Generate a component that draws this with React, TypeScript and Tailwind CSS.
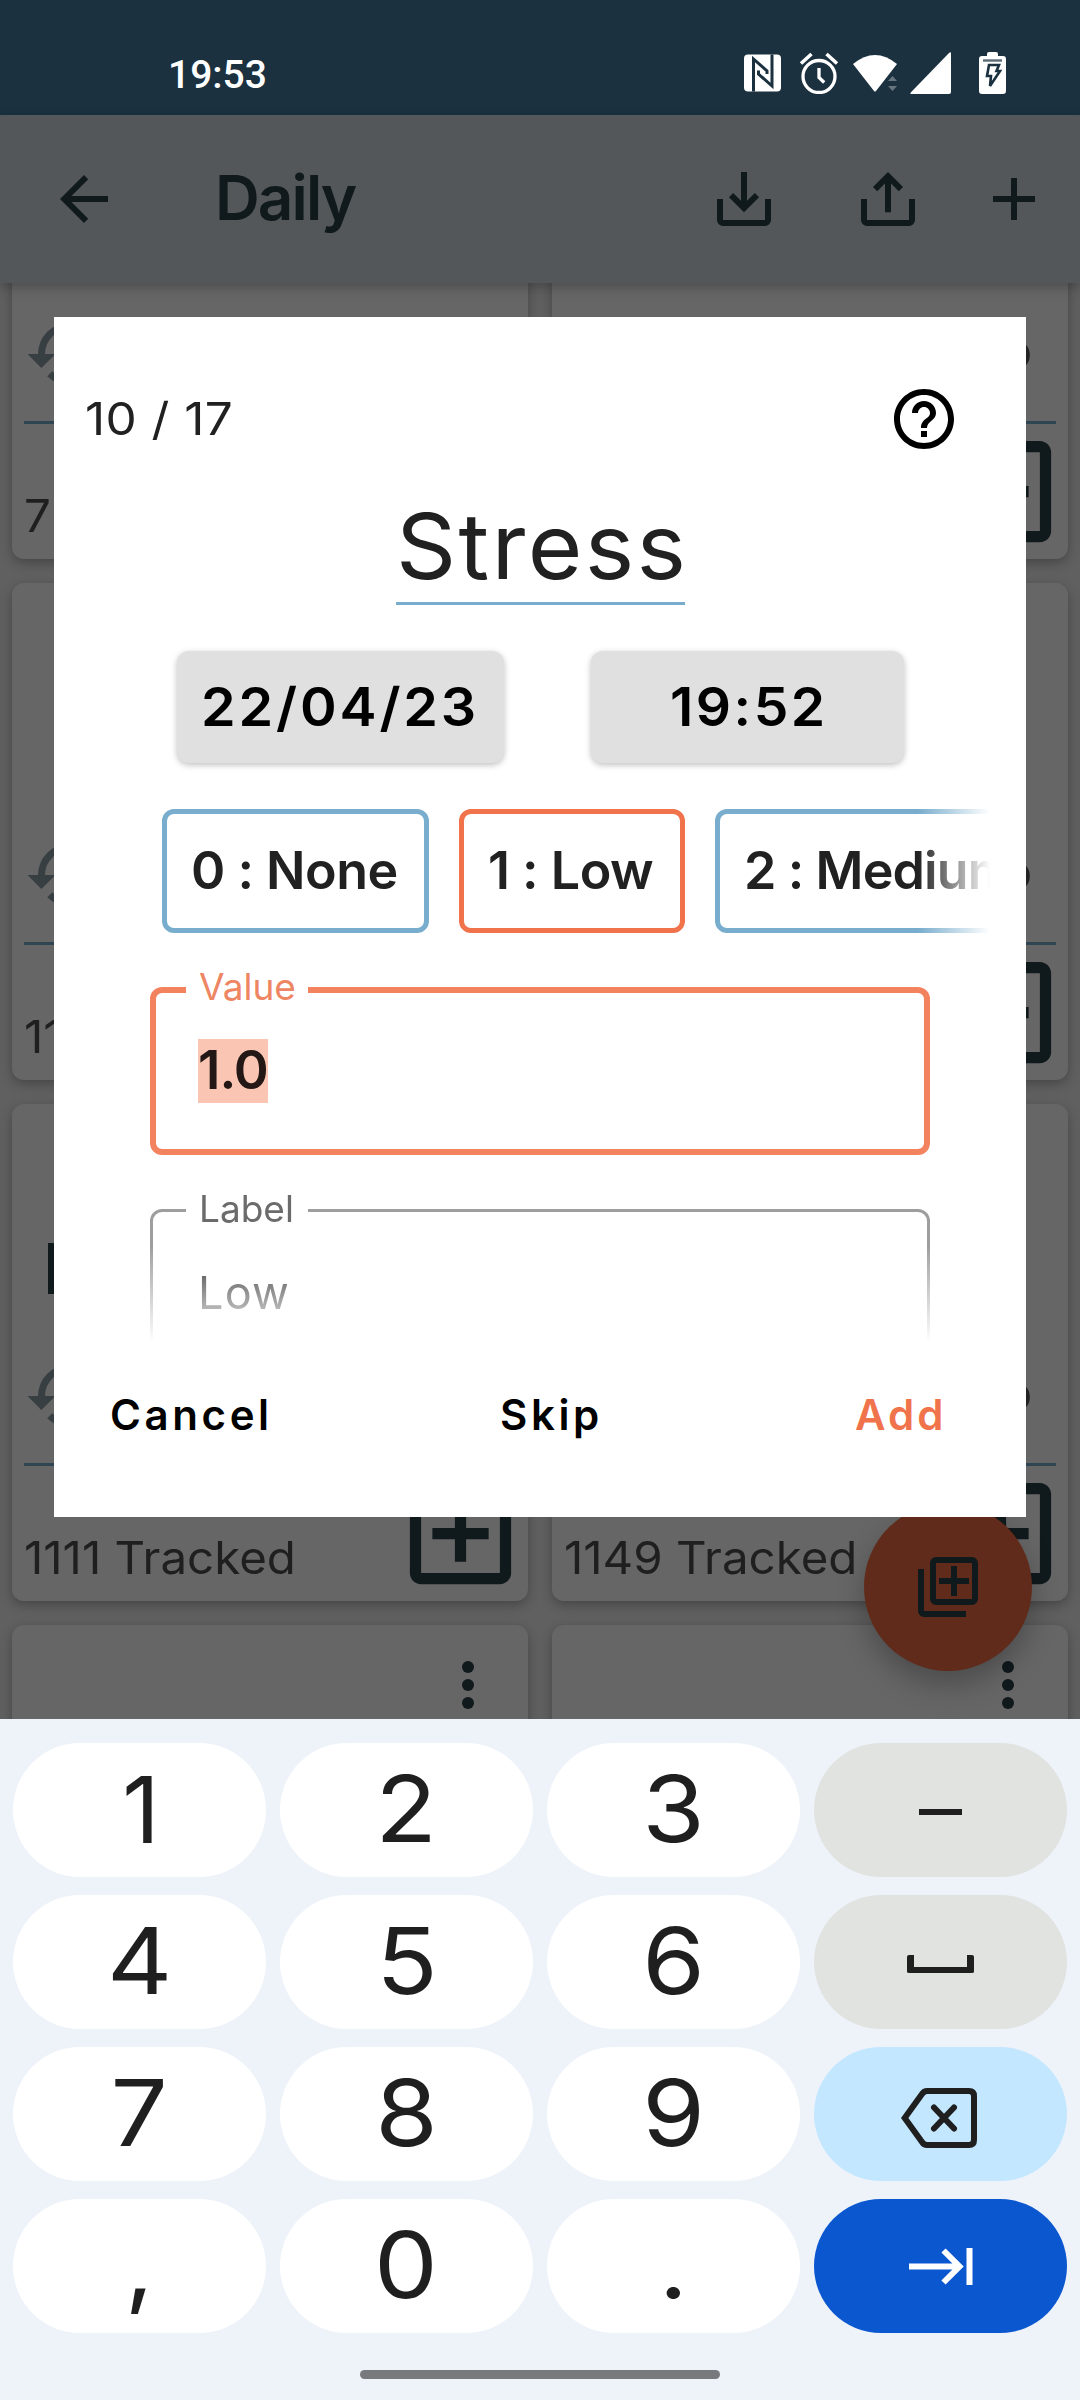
import React from "react";

const SANS = "font-['Inter','Liberation_Sans',sans-serif]";

function ArrowBack() {
  return (
    <svg viewBox="0 0 24 24" className="size-[72px]" fill="#10191c">
      <path d="M20 11H7.83l5.59-5.59L12 4l-8 8 8 8 1.41-1.41L7.83 13H20v-2z" />
    </svg>
  );
}

function TrayIcon({ up }: { up?: boolean }) {
  return (
    <svg viewBox="0 0 24 24" className="size-[72px]" fill="none" stroke="#10191c" strokeWidth="2">
      <path d="M4 12v7a1 1 0 0 0 1 1h14a1 1 0 0 0 1-1v-7" />
      {up ? (
        <path d="M12 16.4V4.4M7.7 8.7L12 4.4l4.3 4.3" />
      ) : (
        <path d="M12 3v12M7.7 10.7L12 15l4.3-4.3" />
      )}
    </svg>
  );
}

function StatusBar() {
  return (
    <div className="flex h-[115px] items-center bg-[#1b313f] pl-[168px] pr-[74px] pt-[35px]">
      <span className="font-['Roboto',sans-serif] text-[39px] font-medium leading-none text-white">19:53</span>
      <div className="ml-auto flex items-center pb-[5px]">
        <svg width="37" height="38" viewBox="0 0 37 38" className="mr-[18px]">
          <rect width="37" height="37" y="0.5" rx="4" fill="#fff" />
          <path
            d="M9.500 37.500V5L23 17v3M28 0.500V32L14.500 20V16.500"
            fill="none"
            stroke="#1b313f"
            strokeWidth="3"
          />
        </svg>
        <svg width="40" height="42" viewBox="0 0 40 42" className="mr-[13px]" fill="none" stroke="#fff">
          <circle cx="20" cy="24.500" r="16" strokeWidth="3.300" />
          <path d="M20 16v9.500l5.200 5" strokeWidth="3.300" />
          <path d="M2 11.500L12.500 2M38 11.500L27.500 2" strokeWidth="3.600" />
        </svg>
        <svg width="46" height="42" viewBox="0 0 46 42" className="mr-[12px]">
          <path d="M1 12Q23-6 45 12L24 39Q23 40 22 39Z" fill="#fff" />
          <path d="M36 29l4.500-5 4.500 5zM36 34l4.500 5 4.500-5z" fill="#66757f" />
        </svg>
        <svg width="41" height="42" viewBox="0 0 41 42" className="mr-[28px]">
          <path d="M41 1.500V40q0 2-2 2H1.500Q-.5 42 1 40.200L39 1Q41-.8 41 1.500Z" fill="#fff" />
        </svg>
        <svg width="27" height="42" viewBox="0 0 27 42">
          <path d="M8 4V2q0-2 2-2h7q2 0 2 2v2h5q3 0 3 3v32q0 3-3 3H3q-3 0-3-3V7q0-3 3-3z" fill="#fff" />
          <path d="M4 8.500h19" stroke="#5b6b76" strokeWidth="2.400" />
          <path d="M10 13h10l-2.500 6h3.500L11 34l1-10H8z" fill="#fff" stroke="#1b313f" strokeWidth="2.600" />
        </svg>
      </div>
    </div>
  );
}

function AppBar() {
  return (
    <div className="relative z-10 flex h-[168px] items-center bg-[#53575a] pl-[48px] pr-[30px] shadow-[0_4px_12px_rgba(0,0,0,0.25)]">
      <ArrowBack />
      <h1 className="ml-[95px] pb-[2px] text-[62px] font-semibold leading-none tracking-[-1.900px] text-[#10191c]">Daily</h1>
      <div className="ml-auto flex">
        <div className="mr-[72px]">
          <TrayIcon />
        </div>
        <div className="mr-[54px]">
          <TrayIcon up />
        </div>
        <svg viewBox="0 0 24 24" className="size-[72px]" stroke="#10191c" strokeWidth="2">
          <path d="M5 12h14M12 5v14" />
        </svg>
      </div>
    </div>
  );
}

type CardData = { text?: string; marker?: boolean };

function TrackerCard({ text, marker }: CardData) {
  return (
    <div className="flex h-[497px] flex-col rounded-[12px] bg-[#666666] shadow-[0_4px_12px_rgba(0,0,0,0.28)]">
      <div className="flex h-[250px] justify-between pl-[36px] pr-[24px] pt-[24px]">
        <div>{marker && <div className="mt-[115px] h-[51px] w-[14px] bg-[#10191c]" />}</div>
        <svg viewBox="0 0 24 24" className="size-[72px]" fill="#10191c">
          <circle cx="12" cy="6" r="2" />
          <circle cx="12" cy="12" r="2" />
          <circle cx="12" cy="18" r="2" />
        </svg>
      </div>
      <div className="flex h-[84px] items-center justify-between pl-[12px] pr-[36px]">
        <svg viewBox="0 0 24 24" className="size-[84px]" fill="#383f42">
          <path d="M13.500 8H12v5l4.280 2.540.72-1.210-3.500-2.080V8M13 3a9 9 0 0 0-9 9H1l3.960 4.030L9 12H6a7 7 0 0 1 7-7 7 7 0 0 1 7 7 7 7 0 0 1-7 7c-1.930 0-3.680-.79-4.940-2.060l-1.420 1.420A8.900 8.900 0 0 0 13 21a9 9 0 0 0 9-9 9 9 0 0 0-9-9" />
        </svg>
        <span className="pb-[8px] text-[51px] font-semibold leading-none text-[#232323]">o</span>
      </div>
      <div className="mx-[12px] mt-[25px] h-[3px] bg-[#304552]" />
      <div className="flex h-[135px] items-center justify-between pl-[12px]">
        <span className="origin-left scale-x-[1.055] whitespace-pre pt-[48px] text-[45px] leading-none text-[#1f1f1f]">
          {text}
        </span>
        <svg viewBox="0 0 24 24" className="size-[135px] shrink-0" fill="#10191c">
          <path d="M19 3H5c-1.110 0-2 .9-2 2v14c0 1.100.89 2 2 2h14c1.100 0 2-.9 2-2V5c0-1.100-.9-2-2-2zm0 16H5V5h14v14zm-8-2h2v-4h4v-2h-4V7h-2v4H7v2h4z" />
        </svg>
      </div>
    </div>
  );
}

const cards: CardData[] = [
  { text: "7" },
  {},
  { text: "11" },
  {},
  { text: "1111 Tracked", marker: true },
  { text: "1149 Tracked" },
  {},
  {},
];

function Background() {
  return (
    <div className="h-[1436px] overflow-hidden bg-[#606060]">
      <div className="-mt-[221px] grid grid-cols-2 gap-[24px] px-[12px]">
        {cards.map((c, i) => (
          <TrackerCard key={i} {...c} />
        ))}
      </div>
    </div>
  );
}

function Fab() {
  return (
    <div className="absolute left-[864px] top-[1503px] flex size-[168px] items-center justify-center rounded-full bg-[#602b1a] shadow-[0_14px_28px_rgba(0,0,0,0.25)]">
      <svg viewBox="0 0 24 24" className="size-[72px]" fill="none" stroke="#10191c" strokeWidth="2">
        <path d="M3 6v14a1 1 0 0 0 1 1h14" />
        <rect x="7" y="3" width="14" height="14" rx="1" />
        <path d="M9 10h10M14 5v10" />
      </svg>
    </div>
  );
}

function Dialog() {
  return (
    <div className="absolute left-[54px] top-[317px] flex h-[1200px] w-[972px] flex-col bg-white pt-[66px]">
      <div className="flex h-[72px] items-center justify-between pl-[31px] pr-[66px]">
        <span className="origin-left scale-x-[1.1] whitespace-pre pb-[2px] text-[45px] leading-none tracking-[0.400px] text-[#212121]">
          10 / 17
        </span>
        <svg viewBox="0 0 24 24" className="size-[72px]">
          <path d="M11 18h2v-2h-2v2zm1-16C6.480 2 2 6.480 2 12s4.480 10 10 10 10-4.480 10-10S17.520 2 12 2zm0 18c-4.410 0-8-3.590-8-8s3.590-8 8-8 8 3.590 8 8-3.590 8-8 8zm0-14c-2.210 0-4 1.790-4 4h2c0-1.100.9-2 2-2s2 .9 2 2c0 2-3 1.750-3 5h2c0-2.250 3-2.500 3-5 0-2.210-1.790-4-4-4z" />
        </svg>
      </div>

      <h2 className="ml-[342px] mt-[37px] h-[113px] w-[289px] border-b-[3px] border-[#78adcd] text-[91px] leading-[109px] text-[#212121]">
        <span className="inline-block origin-left scale-x-[1.03] tracking-[2.300px]">Stress</span>
      </h2>

      <div className="mt-[46px] flex gap-[87px] pl-[123px] text-[53px] font-semibold leading-[110px] text-black">
        <button className="h-[112px] w-[327px] rounded-[12px] bg-[#e0e0e0] pl-[24px] text-left shadow-[0_2px_6px_rgba(0,0,0,0.25)]">
          <span className="inline-block origin-left scale-x-[1.05] tracking-[2.700px]">22/04/23</span>
        </button>
        <button className="h-[112px] w-[313px] rounded-[12px] bg-[#e0e0e0] pl-[79px] text-left shadow-[0_2px_6px_rgba(0,0,0,0.25)]">
          <span className="inline-block origin-left scale-x-[1.04] tracking-[2.400px]">19:52</span>
        </button>
      </div>

      <div className="ml-[108px] mt-[46px] flex w-[828px] gap-[30px] overflow-hidden whitespace-pre text-[52px] font-semibold leading-[114px] tracking-[-0.500px] text-[#212121] [mask-image:linear-gradient(to_right,black_756px,transparent_828px)]">
        <div className="h-[124px] w-[267px] shrink-0 rounded-[12px] border-[5px] border-[#78adcd] pl-[24px]">0 : None</div>
        <div className="h-[124px] w-[226px] shrink-0 rounded-[12px] border-[5px] border-[#f0734c] pl-[24px]">1 : Low</div>
        <div className="h-[124px] w-[342px] shrink-0 rounded-[12px] border-[5px] border-[#78adcd] pl-[24px] tracking-[-0.900px]">
          2 : Medium
        </div>
      </div>

      <div className="relative ml-[96px] mt-[54px] flex h-[168px] w-[780px] shrink-0 items-center rounded-[12px] border-[6px] border-[#f3825f] pl-[42px]">
        <label className="absolute -left-[6px] -top-[27px] ml-[36px] h-[42px] w-[122px] bg-white pl-[13px] text-[37px] leading-[42px] text-[#ee8663]">
          Value
        </label>
        <span className="h-[64px] w-[70px] bg-[#fac5b3] text-[53px] font-semibold leading-[63px] tracking-[-1px] text-[#231815]">
          1.0
        </span>
      </div>

      <div className="mt-[25px] h-[162px] shrink-0 overflow-hidden pl-[96px] pt-[29px] [mask-image:linear-gradient(to_bottom,black_66px,transparent_162px)]">
        <div className="relative flex h-[168px] w-[780px] items-center rounded-[12px] border-[3px] border-[#9e9e9e] pl-[45px]">
          <label className="absolute left-[33px] -top-[24px] h-[42px] w-[122px] bg-white pl-[13px] text-[37px] leading-[42px] text-[#6b6b6b]">
            Label
          </label>
          <span className="pb-[2px] text-[45px] leading-none tracking-[1.200px] text-[#2b2b2b]">Low</span>
        </div>
      </div>

      <div className="flex h-[145px] items-center pl-[56px] text-[42px] font-semibold leading-none text-black">
        <button className="w-[390px] text-left tracking-[3.600px]">Cancel</button>
        <button className="w-[355px] text-left tracking-[3.600px]">Skip</button>
        <button className="text-left tracking-[3px] text-[#f0734c]">Add</button>
      </div>
    </div>
  );
}

function Key({ children, tone = "bg-white" }: { children: React.ReactNode; tone?: string }) {
  return (
    <div className={`flex h-[134px] items-center justify-center rounded-full text-[92px] leading-none text-[#1f1f1f] ${tone}`}>
      {children}
    </div>
  );
}

function Digit({ children }: { children: string }) {
  return <span className="scale-x-[1.1] pb-[2px]">{children}</span>;
}

function Keyboard() {
  return (
    <div className="flex h-[681px] flex-col items-center bg-[#eef3fa] px-[13px] pt-[24px]">
      <div className="grid w-full grid-cols-4 gap-x-[14px] gap-y-[18px]">
        <Key><span className="pl-[3px]"><Digit>1</Digit></span></Key>
        <Key><Digit>2</Digit></Key>
        <Key><Digit>3</Digit></Key>
        <Key tone="bg-[#e1e3e1]">
          <div className="mt-[3px] h-[6px] w-[43px] bg-[#1f1f1f]" />
        </Key>
        <Key><Digit>4</Digit></Key>
        <Key><Digit>5</Digit></Key>
        <Key><Digit>6</Digit></Key>
        <Key tone="bg-[#e1e3e1]">
          <div className="mt-[4px] h-[18px] w-[67px] rounded-[2px] border-x-[7px] border-b-[6px] border-[#1f1f1f]" />
        </Key>
        <Key><Digit>7</Digit></Key>
        <Key><Digit>8</Digit></Key>
        <Key><Digit>9</Digit></Key>
        <Key tone="bg-[#c2e7ff]">
          <svg width="76" height="60" viewBox="0 0 76 60" className="mr-[4px] mt-[7px]" fill="none" stroke="#1f1f1f" strokeWidth="6">
            <path d="M3.700 30L21 6Q23 3 26 3H68Q73 3 73 8V52Q73 57 68 57H26Q23 57 21 54Z" />
            <path d="M33 19.500L53 40.500M53 19.500L33 40.500" strokeLinecap="round" />
          </svg>
        </Key>
        <Key><Digit>,</Digit></Key>
        <Key><Digit>0</Digit></Key>
        <Key><Digit>.</Digit></Key>
        <Key tone="bg-[#0b57d0]">
          <svg width="64" height="37" viewBox="0 0 64 37" fill="none" stroke="#fff" strokeWidth="6">
            <path d="M0 18.500H50M34.500 2.500L50.500 18.500L34.500 34.500M60.500 0V37" />
          </svg>
        </Key>
      </div>
      <div className="mt-[37px] h-[9px] w-[360px] rounded-full bg-[#77797d]" />
    </div>
  );
}

export default function App() {
  return (
    <div className={`relative h-[2400px] w-[1080px] overflow-hidden ${SANS}`}>
      <StatusBar />
      <AppBar />
      <Background />
      <Fab />
      <div className="relative z-10">
        <Keyboard />
      </div>
      <div className="absolute left-0 top-0 z-20">
        <Dialog />
      </div>
    </div>
  );
}
